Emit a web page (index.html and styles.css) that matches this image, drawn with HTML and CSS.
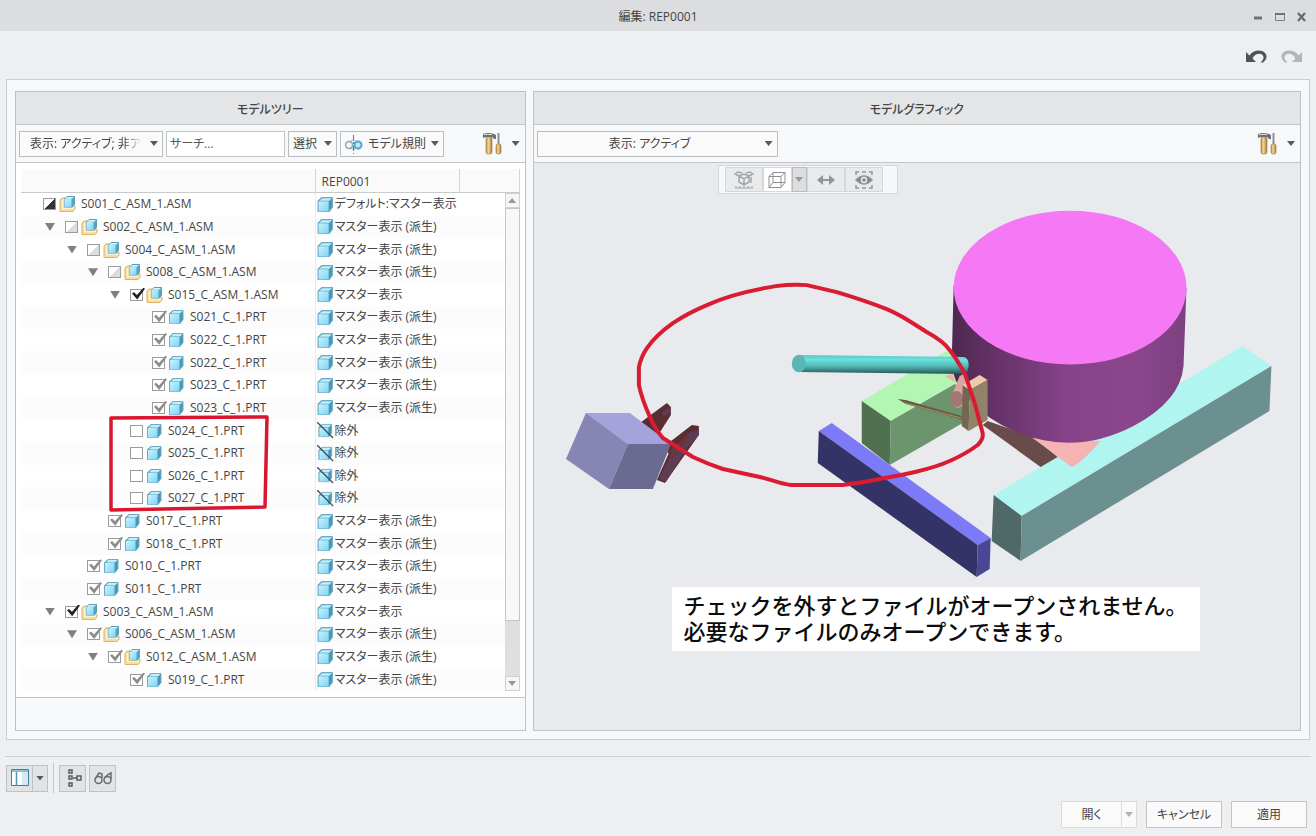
FILE: index.html
```html
<!DOCTYPE html>
<html lang="ja">
<head>
<meta charset="utf-8">
<title>編集: REP0001</title>
<link rel="stylesheet" href="styles.css">
</head>
<body>
<svg class="defs" width="0" height="0" aria-hidden="true">
  <defs>
    <linearGradient id="ice" x1="0" y1="0" x2="1" y2="1"><stop offset="0" stop-color="#c9f2fd"/><stop offset="1" stop-color="#7dd5f4"/></linearGradient>
    <linearGradient id="wood" x1="0" x2="1"><stop offset="0" stop-color="#b98d45"/><stop offset=".4" stop-color="#f3d795"/><stop offset="1" stop-color="#a87a38"/></linearGradient>
    <symbol id="asm" viewBox="0 0 17 16">
      <path d="M1 4l2-2h3v8h10v3l-2 2.500H1z" fill="#f7dfa0" stroke="#dcb368"/>
      <path d="M3.500 4v8.500H15" fill="none" stroke="#fff3cf"/>
      <path d="M5.500 3L8 .5h7.500v8L13 11H5.500z" fill="#4fa6c9" stroke="#5a9dbb"/>
      <path d="M5.500 3h7v8h-7z" fill="url(#ice)"/><path d="M6 2.800L8 1h7l-2 1.800z" fill="#d5f4fc"/>
    </symbol>
    <symbol id="prt" viewBox="0 0 16 16">
      <path d="M1 4.500L4.500 1.500h10v9L11.500 14.500H1z" fill="#4797b9" stroke="#6faac4" stroke-linejoin="round"/>
      <path d="M1.500 5h9.500v9.500H1.500z" fill="url(#ice)"/><path d="M2 4.500l3-2.500h9L11.500 4.500z" fill="#c3effb"/>
    </symbol>
    <symbol id="off" viewBox="0 0 18 18">
      <use href="#prt" x="1" y="1" width="16" height="16"/><path d="M0 0l17 17" stroke="#444d55" stroke-width="1.400"/>
    </symbol>
    <symbol id="tools" viewBox="0 0 20 24">
      <path d="M1 2q5-2 11 0l2 1v4h-2l-2-2H6L4 5 1 6z" fill="#6d7276"/><path d="M2 2.500h8" stroke="#d3d7da"/>
      <rect x="4" y="5" width="6" height="17" rx="2" fill="url(#wood)" stroke="#9b763e" stroke-width=".6"/>
      <path d="M16.500 1v12" stroke="#8b9197" stroke-width="2"/><rect x="14" y="12" width="5" height="10" rx="2" fill="url(#wood)" stroke="#9b763e" stroke-width=".6"/>
    </symbol>
  </defs>
</svg>

<header class="titlebar">
  <h1>編集: REP0001</h1>
  <div class="winbtns">
    <button aria-label="最小化"><svg width="12" height="12"><path d="M2 7h8" stroke="#707375" stroke-width="3"/></svg></button>
    <button aria-label="最大化"><svg width="12" height="12"><path d="M1.500 2.500h9v7h-9z" fill="none" stroke="#808385"/><path d="M1 3h10" stroke="#707375" stroke-width="2"/></svg></button>
    <button aria-label="閉じる"><svg width="12" height="12"><path d="M2 2l7 8M9 2l-7 8" stroke="#66696b" stroke-width="2.200"/></svg></button>
  </div>
</header>

<div class="history">
  <button aria-label="元に戻す"><svg width="22" height="14" fill="#4f5355"><path d="M1 2v10h10L7.500 8.500C9 4 15 2.500 17.500 5c2 2 1 5-2 7.500h2.500c4-3 4.500-7 2-9.500C16-1 8 0 4.500 5.500z"/></svg></button>
  <button aria-label="やり直し"><svg width="22" height="14" fill="#b1b5b8"><path d="M21 2v10H11l3.500-3.500C13 4 7 2.500 4.500 5c-2 2-1 5 2 7.500H4C0 9.500-.5 5.500 2 3 6-1 14 0 17.500 5.500z"/></svg></button>
</div>

<main class="frame">
  <section class="panel tree-panel">
    <h2>モデルツリー</h2>
    <div class="bar">
      <button class="drop filter"><span class="fade">表示: アクティブ; 非ア</span><i class="tri"></i></button>
      <input class="search" type="text" aria-label="サーチ" placeholder="サーチ...">
      <button class="drop">選択<i class="tri"></i></button>
      <button class="drop rules"><svg width="18" height="20" fill="none"><circle cx="4" cy="11" r="3.500" stroke="#93a3aa" stroke-width="1.500"/><circle cx="13" cy="11" r="3.500" fill="#bdeafa" stroke="#4aa9ce" stroke-width="2"/><path d="M4 8l4-2 5 2M5 14l4 1 4-1" stroke="#7daec0"/><path d="M8.500 1v19" stroke="#66777f" stroke-dasharray="5 2 2 2"/></svg>モデル規則<i class="tri"></i></button>
      <button class="tool" aria-label="設定"><svg width="20" height="24"><use href="#tools"/></svg><i class="tri"></i></button>
    </div>
    <div class="tree-area">
      <table>
        <colgroup><col><col class="c-rep"><col class="c-end"></colgroup>
        <thead><tr><th></th><th>REP0001</th><th></th></tr></thead>
        <tbody>
        <tr><td><label class="n l0"><i class="no"></i><input type="checkbox" class="half strong"><svg><use href="#asm"/></svg>S001_C_ASM_1.ASM</label></td><td><span class="v"><svg><use href="#prt"/></svg>デフォルト:マスター表示</span></td><td></td></tr>
        <tr><td><label class="n l1"><i></i><input type="checkbox" class="half"><svg><use href="#asm"/></svg>S002_C_ASM_1.ASM</label></td><td><span class="v"><svg><use href="#prt"/></svg>マスター表示 (派生)</span></td><td></td></tr>
        <tr><td><label class="n l2"><i></i><input type="checkbox" class="half"><svg><use href="#asm"/></svg>S004_C_ASM_1.ASM</label></td><td><span class="v"><svg><use href="#prt"/></svg>マスター表示 (派生)</span></td><td></td></tr>
        <tr><td><label class="n l3"><i></i><input type="checkbox" class="half"><svg><use href="#asm"/></svg>S008_C_ASM_1.ASM</label></td><td><span class="v"><svg><use href="#prt"/></svg>マスター表示 (派生)</span></td><td></td></tr>
        <tr><td><label class="n l4"><i></i><input type="checkbox" class="strong" checked><svg><use href="#asm"/></svg>S015_C_ASM_1.ASM</label></td><td><span class="v"><svg><use href="#prt"/></svg>マスター表示</span></td><td></td></tr>
        <tr><td><label class="n l5"><i class="no"></i><input type="checkbox" checked><svg><use href="#prt"/></svg>S021_C_1.PRT</label></td><td><span class="v"><svg><use href="#prt"/></svg>マスター表示 (派生)</span></td><td></td></tr>
        <tr><td><label class="n l5"><i class="no"></i><input type="checkbox" checked><svg><use href="#prt"/></svg>S022_C_1.PRT</label></td><td><span class="v"><svg><use href="#prt"/></svg>マスター表示 (派生)</span></td><td></td></tr>
        <tr><td><label class="n l5"><i class="no"></i><input type="checkbox" checked><svg><use href="#prt"/></svg>S022_C_1.PRT</label></td><td><span class="v"><svg><use href="#prt"/></svg>マスター表示 (派生)</span></td><td></td></tr>
        <tr><td><label class="n l5"><i class="no"></i><input type="checkbox" checked><svg><use href="#prt"/></svg>S023_C_1.PRT</label></td><td><span class="v"><svg><use href="#prt"/></svg>マスター表示 (派生)</span></td><td></td></tr>
        <tr><td><label class="n l5"><i class="no"></i><input type="checkbox" checked><svg><use href="#prt"/></svg>S023_C_1.PRT</label></td><td><span class="v"><svg><use href="#prt"/></svg>マスター表示 (派生)</span></td><td></td></tr>
        <tr><td><label class="n l4"><i class="no"></i><input type="checkbox"><svg><use href="#prt"/></svg>S024_C_1.PRT</label></td><td><span class="v"><svg><use href="#off"/></svg>除外</span></td><td></td></tr>
        <tr><td><label class="n l4"><i class="no"></i><input type="checkbox"><svg><use href="#prt"/></svg>S025_C_1.PRT</label></td><td><span class="v"><svg><use href="#off"/></svg>除外</span></td><td></td></tr>
        <tr><td><label class="n l4"><i class="no"></i><input type="checkbox"><svg><use href="#prt"/></svg>S026_C_1.PRT</label></td><td><span class="v"><svg><use href="#off"/></svg>除外</span></td><td></td></tr>
        <tr><td><label class="n l4"><i class="no"></i><input type="checkbox"><svg><use href="#prt"/></svg>S027_C_1.PRT</label></td><td><span class="v"><svg><use href="#off"/></svg>除外</span></td><td></td></tr>
        <tr><td><label class="n l3"><i class="no"></i><input type="checkbox" checked><svg><use href="#prt"/></svg>S017_C_1.PRT</label></td><td><span class="v"><svg><use href="#prt"/></svg>マスター表示 (派生)</span></td><td></td></tr>
        <tr><td><label class="n l3"><i class="no"></i><input type="checkbox" checked><svg><use href="#prt"/></svg>S018_C_1.PRT</label></td><td><span class="v"><svg><use href="#prt"/></svg>マスター表示 (派生)</span></td><td></td></tr>
        <tr><td><label class="n l2"><i class="no"></i><input type="checkbox" checked><svg><use href="#prt"/></svg>S010_C_1.PRT</label></td><td><span class="v"><svg><use href="#prt"/></svg>マスター表示 (派生)</span></td><td></td></tr>
        <tr><td><label class="n l2"><i class="no"></i><input type="checkbox" checked><svg><use href="#prt"/></svg>S011_C_1.PRT</label></td><td><span class="v"><svg><use href="#prt"/></svg>マスター表示 (派生)</span></td><td></td></tr>
        <tr><td><label class="n l1"><i></i><input type="checkbox" class="strong" checked><svg><use href="#asm"/></svg>S003_C_ASM_1.ASM</label></td><td><span class="v"><svg><use href="#prt"/></svg>マスター表示</span></td><td></td></tr>
        <tr><td><label class="n l2"><i></i><input type="checkbox" checked><svg><use href="#asm"/></svg>S006_C_ASM_1.ASM</label></td><td><span class="v"><svg><use href="#prt"/></svg>マスター表示 (派生)</span></td><td></td></tr>
        <tr><td><label class="n l3"><i></i><input type="checkbox" checked><svg><use href="#asm"/></svg>S012_C_ASM_1.ASM</label></td><td><span class="v"><svg><use href="#prt"/></svg>マスター表示 (派生)</span></td><td></td></tr>
        <tr><td><label class="n l4"><i class="no"></i><input type="checkbox" checked><svg><use href="#prt"/></svg>S019_C_1.PRT</label></td><td><span class="v"><svg><use href="#prt"/></svg>マスター表示 (派生)</span></td><td></td></tr>
        </tbody>
      </table>
      <div class="scroll"><button aria-label="上へ"><i class="tri up"></i></button><div class="thumb"></div><button aria-label="下へ"><i class="tri"></i></button></div>
      <svg class="mark" width="162" height="98" viewBox="0 0 162 98"><path d="M3 4L159 3 157 93 3 96z" fill="none" stroke="#d9152f" stroke-width="3.500" stroke-linejoin="round"/></svg>
    </div>
    <div class="panel-foot"></div>
  </section>

  <section class="panel view-panel">
    <h2>モデルグラフィック</h2>
    <div class="bar">
      <button class="drop show"><span>表示: アクティブ</span><i class="tri"></i></button>
      <button class="tool" aria-label="設定"><svg width="20" height="24"><use href="#tools"/></svg><i class="tri"></i></button>
    </div>
    <div class="canvas">
      <svg class="scene" viewBox="534 163 767 567">
        <defs>
          <linearGradient id="drum" x1="0" x2="1"><stop offset="0" stop-color="#4e2850"/><stop offset=".2" stop-color="#673369"/><stop offset=".5" stop-color="#87438a"/><stop offset=".8" stop-color="#8b468e"/><stop offset="1" stop-color="#7d407f"/></linearGradient>
          <linearGradient id="rod" x1="0" y1="0" x2="0" y2="1"><stop offset="0" stop-color="#55c8c4"/><stop offset=".25" stop-color="#6be3df"/><stop offset=".6" stop-color="#52b6b3"/><stop offset="1" stop-color="#265250"/></linearGradient>
        </defs>
        <path d="M862 401L947 351l16 8v30l-9-5-63 37z" fill="#b3f5b3"/>
        <path d="M862 401l29 20-1 44-28-22z" fill="#507150"/>
        <path d="M891 421l64-37 8 8v31l-73 42z" fill="#6c946d"/>
        <path d="M945 376l8-2 2 8z" fill="#f0aeb0"/>
        <path d="M994 495l249-149 29 20-250 150z" fill="#b1f5f1"/>
        <path d="M994 495l28 21-1 45-29-20z" fill="#4f6968"/>
        <path d="M1022 516l250-150-2 45-249 150z" fill="#6c908f"/>
        <path d="M983 425l5-4 48 17 22 19-17 10z" fill="#694b4a"/>
        <path d="M1033 438l39 29q10-4 29-26z" fill="#f5b3b3"/>
        <path d="M954 285l-2 78q2 35 50 62 66 35 132 1 47-25 50-60l3-78z" fill="url(#drum)"/>
        <ellipse cx="1070.500" cy="287.500" rx="116.500" ry="77" fill="#f579f5"/>
        <path d="M819 431l13-8 159 115-13 7z" fill="#7c7af6"/>
        <path d="M819 431l159 114-1 32-159-114z" fill="#343368"/>
        <path d="M978 545l13-7-1 31-13 8z" fill="#4a4894"/>
        <path d="M960 376l-9 22q0 8 7 10l8-4 3-24-5-6z" fill="#e0a3a3"/>
        <ellipse cx="957" cy="399" rx="6.500" ry="8" fill="#a47674"/>
        <path d="M898 399l8 1 56 16 6 6-11-4-51-14z" fill="#6b5d41"/><path d="M905 403l60 16" stroke="#a3926d"/>
        <path d="M963 385l7 5-1 41-7-5z" fill="#74664f"/><path d="M963 385l17-10 8 5-18 10z" fill="#f0c9ab"/><path d="M970 390l18-10v40l-19 11z" fill="#93826a"/>
        <path d="M799 355l165 2q5 1 5 8t-5 9l-165-2z" fill="url(#rod)"/><ellipse cx="799" cy="363.500" rx="7" ry="8.700" fill="#5ab7b3"/>
        <path d="M640 423l27-20 4 4v8l-14 22-14-4z" fill="#5a2e30"/><path d="M662 412l7-5 2 3-3 5-5 1z" fill="#5d3b54"/>
        <path d="M666 445l26-20 7 1v9l-34 48-8-3 12-27z" fill="#5b2d30"/><path d="M673 448l18-16 8-2v5l-11 12-22 35-7-3 10-20z" fill="#5e3d54"/><path d="M668 453l20-16-16 21" stroke="#6b3436" fill="none" stroke-width="2"/>
        <path d="M586 413h44l41 31h-43z" fill="#a5a3db"/><path d="M586 413l42 31-19 45-43-30z" fill="#8785b3"/><path d="M628 444h43l-18 45h-44z" fill="#6b6a90"/>
        <path d="M776 286Q792 284 807 285L837 292Q864 300 887 309C902 315 916 325 927 332C938 338 945 343 950 350C956 357 960 365 965 373L975 403 983 433Q984 439 978 445Q966 454 950 461C930 470 902 475 880 479Q861 483 843 485H791C780 484 770 479 760 477L723 469Q708 464 693 457L663 438Q655 429 650 417Q642 399 639 385V367Q641 357 647 348Q656 335 673 323Q688 313 707 305Q733 293 776 286" fill="none" stroke="#d91c32" stroke-width="4" stroke-linejoin="round" stroke-linecap="round"/>
      </svg>
      <div class="viewbar">
        <button aria-label="再フィット"><svg width="20" height="20" fill="none" stroke="#a3a6a9" stroke-width="1.500"><path d="M5 6l5-2 5 2-5 3zM5 6v6l5 3 5-3V6M10 9v6M5 6L1 4l3-2 4 1M15 6l4-2-3-2-4 1M17 7v6"/><path d="M1 18h18M2 16v2M6 16v2M10 16v2M14 16v2M18 16v2" stroke-width="1"/></svg></button>
        <button class="on" aria-label="表示スタイル"><svg width="20" height="20" fill="none" stroke="#8d9093"><path d="M2 6.500h12v11H2zM6 2.500h12v10H6zM2 6.500l4-4M14 6.500l4-4M2 17.500l4-5M14 17.500l4-5"/></svg></button>
        <button class="mini" aria-label="表示スタイルの選択"><i class="tri"></i></button>
        <button aria-label="分解"><svg width="20" height="20" fill="#929598"><path d="M1 10l6-5v4h6V5l6 5-6 5v-4H7v4z"/></svg></button>
        <button aria-label="可視性"><svg width="20" height="20" fill="none" stroke="#929598" stroke-width="1.500"><path d="M2 5V2h3M8 2h4M15 2h3v3M2 15v3h3M8 18h4M15 18h3v-3"/><path d="M2 10q8-8 16 0-8 8-16 0z" fill="#85888b"/><circle cx="10" cy="10" r="2.500" fill="#85888b" stroke="#e8e9ea"/></svg></button>
      </div>
      <p class="caption">チェックを外すとファイルがオープンされません。<br>必要なファイルのみオープンできます。</p>
    </div>
  </section>
</main>

<footer>
  <div class="status">
    <div class="split"><button class="sq" aria-label="ペイン表示"><svg width="20" height="20"><path d="M1.500 1.500h17v16h-17z" fill="#fafdfe" stroke="#417f9a"/><path d="M2 2h16v2H2z" fill="#8cc2d7"/><path d="M6.500 4v14" stroke="#5595b0" stroke-width="1.500"/><path d="M12 4h6v13h-6z" fill="#d3eaf3"/></svg></button><button class="mini" aria-label="ペインの選択"><i class="tri"></i></button></div>
    <span class="sep"></span>
    <button class="sq" aria-label="ツリー"><svg width="20" height="20" fill="none" stroke="#595d60" stroke-width="1.500"><path d="M6 2h3v3H6zM6 8h3v3H6zM6 15h3v3H6zM14 8h4v4h-4zM10 10h4"/></svg></button>
    <button class="sq" aria-label="検索"><svg width="20" height="20" fill="none" stroke="#696d70" stroke-width="1.500"><circle cx="5.500" cy="12" r="3.500"/><circle cx="14.500" cy="12" r="3.500"/><path d="M2 11l4-6 3 1v4M18 11V5l-2 1-5 4"/></svg></button>
  </div>
  <div class="actions">
    <div class="split"><button class="act">開く</button><button class="mini" aria-label="開くオプション"><i class="tri"></i></button></div>
    <button class="act">キャンセル</button>
    <button class="act">適用</button>
  </div>
</footer>
</body>
</html>
```

FILE: styles.css
```css
* { box-sizing: border-box; }

body {
  margin: 0;
  height: 100vh;
  min-height: 720px;
  display: flex;
  flex-direction: column;
  background: #eeeff1;
  color: #454545;
  font: 12px/16px "Open Sans", "Noto Sans CJK JP", sans-serif;
  font-feature-settings: "palt";
}

button, input {
  font: inherit;
  font-feature-settings: inherit;
  color: inherit;
  margin: 0;
}

button {
  display: flex;
  align-items: center;
  justify-content: center;
  padding: 0;
  border: 0;
  background: none;
}

h1, h2, p { margin: 0; }
svg { flex: none; }
.defs { position: absolute; }

.tri {
  flex: none;
  width: 8px;
  height: 5px;
  background: #57595b;
  clip-path: polygon(0 0, 100% 0, 50% 100%);
}
.tri.up { clip-path: polygon(50% 0, 100% 100%, 0 100%); }

/* Title bar */
.titlebar {
  flex: none;
  height: 31px;
  display: grid;
  grid-template-columns: 1fr auto 1fr;
  align-items: center;
  padding: 2px 8px 0;
  background: #dcdddf;
}
.titlebar h1 {
  grid-column: 2;
  font-size: 12px;
  font-weight: 400;
}
.winbtns {
  display: flex;
  justify-content: flex-end;
  gap: 10px;
}

.history {
  flex: none;
  height: 48px;
  display: flex;
  align-items: center;
  justify-content: flex-end;
  gap: 14px;
  padding: 4px 13px 0;
}

/* Two panels */
.frame {
  flex: 1;
  min-height: 0;
  display: grid;
  grid-template-columns: 511fr 769fr;
  gap: 7px;
  margin: 0 6px;
  padding: 11px 8px 8px;
  border: 1px solid #c9ccd0;
  background: #f7f8fa;
}
.panel {
  min-width: 0;
  min-height: 0;
  display: flex;
  flex-direction: column;
  border: 1px solid #bfc2c5;
}
.panel h2 {
  flex: none;
  height: 33px;
  padding-top: 3px;
  border-bottom: 1px solid #c3c6c9;
  background: #e4e5e7;
  font-size: 12px;
  font-weight: 500;
  line-height: 30px;
  text-align: center;
}
.bar {
  flex: none;
  height: 38px;
  display: flex;
  align-items: center;
  gap: 3px;
  padding: 0 5px 0 3px;
  border-bottom: 1px solid #c3c6c9;
}
.drop {
  height: 26px;
  gap: 7px;
  padding: 0 4px;
  border: 1px solid #babdbf;
  background: #fafafa;
  white-space: nowrap;
}
.rules { gap: 5px; }
.filter {
  width: 144px;
  justify-content: space-between;
  padding-left: 10px;
}
.fade {
  text-align: left;
  -webkit-mask-image: linear-gradient(90deg, #000 86%, transparent);
  mask-image: linear-gradient(90deg, #000 86%, transparent);
}
.search {
  flex: 1;
  min-width: 60px;
  max-width: 119px;
  height: 26px;
  padding: 0 3px;
  border: 1px solid #c3c5c7;
  background: #fff;
}
.search::placeholder { color: #555; opacity: 1; }
.show { width: 241px; }
.show span { flex: 1; }
.tool {
  gap: 10px;
  margin-left: auto;
}

/* Tree */
.tree-area {
  position: relative;
  flex: 1;
  min-height: 0;
  display: grid;
  padding: 6px 5px;
  background: #fff;
}
table {
  width: 100%;
  height: 100%;
  table-layout: fixed;
  border-collapse: separate;
  border-spacing: 0;
}
.c-rep { width: 144px; }
.c-end { width: 60px; }
th {
  height: 24px;
  padding: 3px 6px 0;
  border-right: 1px solid #d4d6d8;
  border-bottom: 1px solid #c8cacc;
  background: #fafafa;
  font-size: 12px;
  font-weight: 400;
  text-align: left;
}
td {
  padding: 0;
}
td:first-child { border-right: 1px solid #e9eaeb; }
tbody tr:nth-child(even) td { background: #fcfcfc; }
.n {
  display: flex;
  align-items: center;
  white-space: nowrap;
}
.l0 { padding-left: 2px; }
.l1 { padding-left: 24px; }
.l2 { padding-left: 46px; }
.l3 { padding-left: 67px; }
.l4 { padding-left: 89px; }
.l5 { padding-left: 111px; }
.n i {
  width: 10px;
  height: 8px;
  margin-right: 10px;
  background: #808080;
  clip-path: polygon(0 0, 100% 0, 50% 100%);
}
.n .no { background: none; }
.n svg {
  width: 17px;
  height: 16px;
  margin: 0 5px 0 3px;
}
.n input {
  appearance: none;
  position: relative;
  flex: none;
  width: 13px;
  height: 12px;
  border: 1px solid #9b9b9b;
  background: #fff;
}
.n input.half { background: linear-gradient(135deg, #fff 50%, #dcdcdc 50%); }
.n input.half.strong { background: linear-gradient(135deg, #fff 50%, #333 50%); }
.n input:checked::before {
  content: "";
  position: absolute;
  inset: -2px -3px 0 1px;
  background: #8c8c8c;
  clip-path: polygon(0 48%, 16% 36%, 38% 60%, 88% 0, 100% 8%, 40% 98%);
}
.n input.strong:checked::before { background: #222; }
.v {
  display: flex;
  align-items: center;
  gap: 1px;
  padding-left: 1px;
  white-space: nowrap;
}
.v svg {
  width: 17px;
  height: 17px;
}
.scroll {
  position: absolute;
  top: 30px;
  right: 5px;
  bottom: 6px;
  width: 15px;
  display: flex;
  flex-direction: column;
  background: #dedfe0;
}
.scroll button {
  flex: none;
  height: 15px;
  border: 1px solid #cfd1d3;
  background: #f6f6f6;
}
.scroll .tri { background: #999; }
.thumb {
  flex: 0 1 413px;
  border: 1px solid #c3c5c7;
  background: #f8f8f8;
}
.scroll button:last-child { margin-top: auto; }
.mark {
  position: absolute;
  left: 92px;
  top: 251px;
  pointer-events: none;
}
.panel-foot {
  flex: none;
  height: 33px;
  border-top: 1px solid #c3c6c9;
}

/* Model view */
.canvas {
  position: relative;
  flex: 1;
  min-height: 0;
  background: #e8eaed;
}
.scene {
  position: absolute;
  inset: 0;
  width: 100%;
  height: 100%;
}
.viewbar {
  position: absolute;
  left: 24%;
  top: 2px;
  height: 29px;
  display: flex;
  padding: 1px 14px 1px 6px;
  border: 1px solid #d5d7d9;
  background: #f6f7f8;
}
.viewbar button {
  width: 38px;
  border: 1px solid #d5d7d9;
  background: #e9eaec;
}
.viewbar .on {
  width: 29px;
  background: #fff;
}
.viewbar .mini {
  width: 15px;
  border-color: #b9bbbd;
  background: #dcddde;
}
.viewbar .tri { background: #999; }
.caption {
  position: absolute;
  left: 18%;
  bottom: 79px;
  width: 528px;
  padding: 5px 12px 7px;
  background: #fff;
  color: #0c0c0c;
  font-size: 22px;
  font-weight: 500;
  line-height: 26px;
  font-feature-settings: normal;
  white-space: nowrap;
}

/* Footer */
footer {
  flex: none;
  margin: 16px 5px 0;
  border-top: 1px solid #cdcfd2;
}
.status {
  display: flex;
  align-items: center;
  gap: 3px;
  height: 42px;
  padding-left: 1px;
}
.split { display: flex; }
.sq, .status .mini {
  height: 27px;
  border: 1px solid #bfc1c3;
  background: #e2e3e4;
}
.sq { width: 27px; }
.mini { width: 15px; }
.status .mini { border-left: 0; }
.sep {
  width: 1px;
  height: 30px;
  margin: 0 2px;
  background: #c3c5c7;
}
.actions {
  display: flex;
  justify-content: flex-end;
  gap: 9px;
  padding: 2px 4px 8px;
}
.act {
  width: 76px;
  height: 27px;
  border: 1px solid #c2c4c6;
  background: #fafafa;
}
.actions .split .act {
  width: 61px;
  border-color: #d9dbdd;
}
.actions .mini {
  border: 1px solid #d9dbdd;
  border-left: 0;
  background: #fafafa;
}
.actions .mini .tri { background: #b0b2b4; }
```
